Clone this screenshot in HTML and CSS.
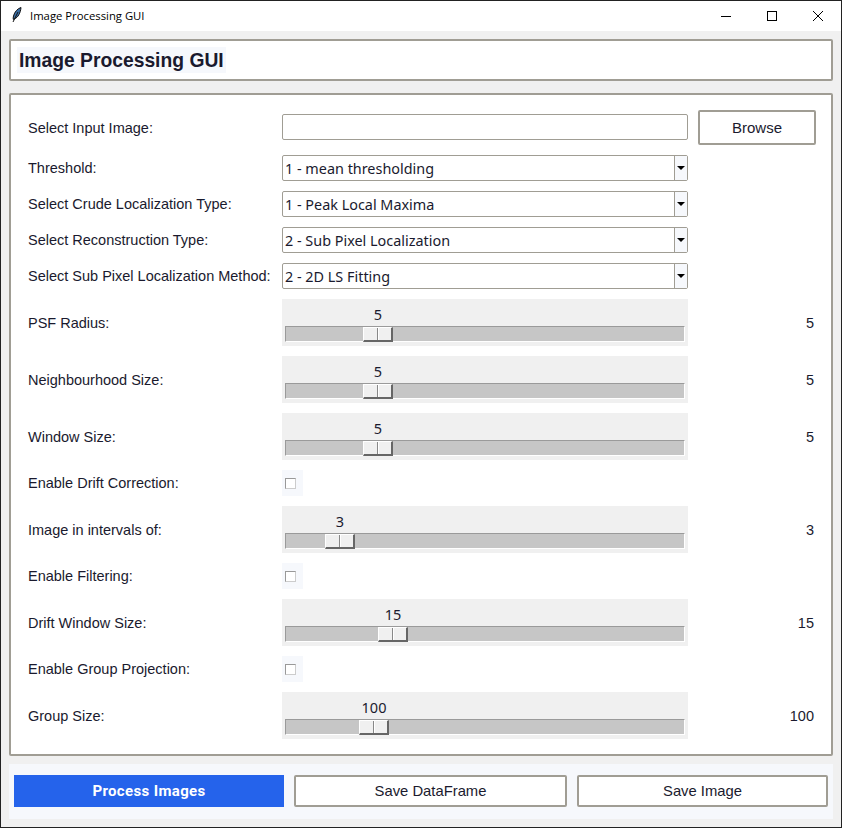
FILE: index.html
```html
<!DOCTYPE html>
<html lang="en">
<head>
    <meta charset="UTF-8">
    <title>Image Processing GUI</title>
    <link rel="stylesheet" href="styles.css">
</head>
<body>
    <div class="window">
        <div class="titlebar">
            <svg class="feather" width="10" height="16" viewBox="0 0 10 16">
                <path d="M9 .5C5.500 1.500 2.500 5 1.500 9c-.4 1.600-.4 2.600-.2 3.400l1.200-.5C6 10.500 8.500 6 9 .5z" fill="#3a6ea5" stroke="#111" stroke-width="1"/>
                <path d="M6 5L1 15" stroke="#111" stroke-width="1" fill="none"/>
            </svg>
            <span class="titlebar-text">Image Processing GUI</span>
            <div class="window-buttons">
                <svg width="12" height="12" viewBox="0 0 12 12"><path d="M1 6.500h10" stroke="#000" fill="none"/></svg>
                <svg width="12" height="12" viewBox="0 0 12 12"><rect x="1.500" y="1.500" width="9" height="9" stroke="#000" fill="none"/></svg>
                <svg width="12" height="12" viewBox="0 0 12 12"><path d="M1 1l10 10M11 1L1 11" stroke="#000" fill="none"/></svg>
            </div>
        </div>

        <div class="content">
            <div class="header-box">
                <h1>Image Processing GUI</h1>
            </div>

            <div class="panel">
                <div class="label">Select Input Image:</div>
                <input class="text-input" type="text">
                <button class="browse" type="button">Browse</button>

                <div class="label">Threshold:</div>
                <div class="combo"><span class="combo-text">1 - mean thresholding</span><span class="combo-arrow"></span></div>
                <div></div>

                <div class="label">Select Crude Localization Type:</div>
                <div class="combo"><span class="combo-text">1 - Peak Local Maxima</span><span class="combo-arrow"></span></div>
                <div></div>

                <div class="label">Select Reconstruction Type:</div>
                <div class="combo"><span class="combo-text">2 - Sub Pixel Localization</span><span class="combo-arrow"></span></div>
                <div></div>

                <div class="label">Select Sub Pixel Localization Method:</div>
                <div class="combo"><span class="combo-text">2 - 2D LS Fitting</span><span class="combo-arrow"></span></div>
                <div></div>

                <div class="label">PSF Radius:</div>
                <div class="scale">
                    <div class="scale-value" style="left: 96px">5</div>
                    <div class="trough"><div class="thumb" style="left: 77px"></div></div>
                </div>
                <div class="value">5</div>

                <div class="label">Neighbourhood Size:</div>
                <div class="scale">
                    <div class="scale-value" style="left: 96px">5</div>
                    <div class="trough"><div class="thumb" style="left: 77px"></div></div>
                </div>
                <div class="value">5</div>

                <div class="label">Window Size:</div>
                <div class="scale">
                    <div class="scale-value" style="left: 96px">5</div>
                    <div class="trough"><div class="thumb" style="left: 77px"></div></div>
                </div>
                <div class="value">5</div>

                <div class="label">Enable Drift Correction:</div>
                <div class="check-wrap"><span class="check"></span></div>
                <div></div>

                <div class="label">Image in intervals of:</div>
                <div class="scale">
                    <div class="scale-value" style="left: 58px">3</div>
                    <div class="trough"><div class="thumb" style="left: 39px"></div></div>
                </div>
                <div class="value">3</div>

                <div class="label">Enable Filtering:</div>
                <div class="check-wrap"><span class="check"></span></div>
                <div></div>

                <div class="label">Drift Window Size:</div>
                <div class="scale">
                    <div class="scale-value" style="left: 111px">15</div>
                    <div class="trough"><div class="thumb" style="left: 92px"></div></div>
                </div>
                <div class="value">15</div>

                <div class="label">Enable Group Projection:</div>
                <div class="check-wrap"><span class="check"></span></div>
                <div></div>

                <div class="label">Group Size:</div>
                <div class="scale">
                    <div class="scale-value" style="left: 92px">100</div>
                    <div class="trough"><div class="thumb" style="left: 73px"></div></div>
                </div>
                <div class="value">100</div>
            </div>

            <div class="footer">
                <button class="btn-primary" type="button">Process Images</button>
                <button class="btn" type="button">Save DataFrame</button>
                <button class="btn" type="button">Save Image</button>
            </div>
        </div>
    </div>
</body>
</html>
```

FILE: styles.css
```css
html, body {
    margin: 0;
    padding: 0;
}
body {
    font-family: "Liberation Sans", Arial, sans-serif;
    font-size: 14.5px;
    color: #1a1a2e;
    background-color: #f0f0f0;
}
.window {
    width: 842px;
    height: 828px;
    box-sizing: border-box;
    border: 1px solid #222;
    background-color: #f0f0f0;
    overflow: hidden;
}
.titlebar {
    height: 30px;
    display: flex;
    align-items: center;
    background-color: #fff;
    padding-left: 11px;
}
.feather {
    margin-right: 8px;
    margin-bottom: 2px;
}
.titlebar-text {
    font-family: "Open Sans", sans-serif;
    font-size: 11.3px;
    color: #000;
    padding-bottom: 1px;
}
.window-buttons {
    margin-left: auto;
    display: flex;
    gap: 34px;
    padding-right: 17px;
}
.content {
    padding: 8px 8px 0 8px;
}
.header-box {
    height: 42px;
    box-sizing: border-box;
    border: 2px solid #a09d94;
    border-radius: 2px;
    background-color: #fff;
    padding: 6px 6px;
}
h1 {
    display: inline-block;
    margin: 0;
    padding: 0 2px;
    height: 26px;
    line-height: 28px;
    font-size: 19.300px;
    font-weight: bold;
    background-color: #f6f8fc;
}
.panel {
    margin-top: 12px;
    box-sizing: border-box;
    height: 663px;
    border: 2px solid #a09d94;
    border-radius: 2px;
    background-color: #fff;
    padding: 15px 15px 15px 17px;
    display: grid;
    grid-template-columns: 254px 406px 128px;
    grid-auto-rows: auto;
    row-gap: 10px;
    align-items: center;
}
.text-input {
    box-sizing: border-box;
    width: 406px;
    height: 26px;
    margin-bottom: 1px;
    border: 1px solid #a09d94;
    border-radius: 2px;
    background-color: #fff;
}
.browse {
    box-sizing: border-box;
    width: 118px;
    height: 35px;
    margin-left: 10px;
    border: 2px solid #a09d94;
    border-radius: 2px;
    background-color: #fff;
    font-family: inherit;
    font-size: 15px;
    color: #1a1a2e;
}
.combo {
    box-sizing: border-box;
    height: 26px;
    display: flex;
    border: 1px solid #a09d94;
    border-radius: 2px;
    background-color: #fff;
}
.combo-text {
    flex: 1;
    padding-left: 2px;
    line-height: 25px;
    font-family: "Noto Sans", sans-serif;
    font-size: 14.4px;
    color: #1a1a2e;
    border-right: 1px solid #a09d94;
}
.combo-arrow {
    width: 12px;
    background-color: #f6f8fc;
    position: relative;
}
.combo-arrow::after {
    content: "";
    position: absolute;
    left: 2px;
    top: 10px;
    border-left: 4px solid transparent;
    border-right: 4px solid transparent;
    border-top: 4px solid #000;
}
.scale {
    position: relative;
    box-sizing: border-box;
    height: 47px;
    padding: 27px 3px 4px 3px;
    background-color: #f0f0f0;
}
.scale-value {
    position: absolute;
    top: 5px;
    transform: translateX(-50%);
    line-height: 20px;
    font-family: "Noto Sans", sans-serif;
    font-size: 14.5px;
}
.trough {
    position: relative;
    box-sizing: border-box;
    height: 16px;
    background-color: #c6c6c6;
    border-top: 1px solid #9a9a9a;
    border-left: 1px solid #9a9a9a;
    border-right: 1px solid #fff;
    border-bottom: 1px solid #fff;
}
.thumb {
    position: absolute;
    top: 0;
    box-sizing: border-box;
    width: 30px;
    height: 15px;
    background-color: #f0f0f0;
    border-top: 1px solid #fff;
    border-left: 1px solid #fff;
    border-right: 2px solid #666;
    border-bottom: 2px solid #666;
}
.thumb::after {
    content: "";
    position: absolute;
    left: 13px;
    top: 0;
    bottom: 0;
    width: 2px;
    background: linear-gradient(to right, #888 50%, #fff 50%);
}
.value {
    text-align: right;
    padding-right: 2px;
}
.check-wrap {
    box-sizing: border-box;
    width: 21px;
    height: 26px;
    padding: 1px 0 0 3px;
    background-color: #f6f8fc;
    display: flex;
    align-items: center;
}
.check {
    box-sizing: border-box;
    width: 11px;
    height: 11px;
    background-color: #fff;
    border-top: 1px solid #999;
    border-left: 1px solid #999;
    border-right: 1px solid #ccc;
    border-bottom: 1px solid #ccc;
}
.footer {
    margin-top: 8px;
    box-sizing: border-box;
    height: 55px;
    padding: 11px 5px 12px 5px;
    display: grid;
    grid-template-columns: 270px 273px 251px;
    column-gap: 10px;
    background-color: #f6f8fc;
}
.btn-primary {
    border: none;
    background-color: #2563eb;
    color: #fff;
    font-family: Roboto, sans-serif;
    font-weight: bold;
    font-size: 15px;
    letter-spacing: 0.35px;
}
.btn {
    border: 2px solid #a09d94;
    border-radius: 2px;
    background-color: #fff;
    color: #1a1a2e;
    font-family: inherit;
    font-size: 14.8px;
}
```
